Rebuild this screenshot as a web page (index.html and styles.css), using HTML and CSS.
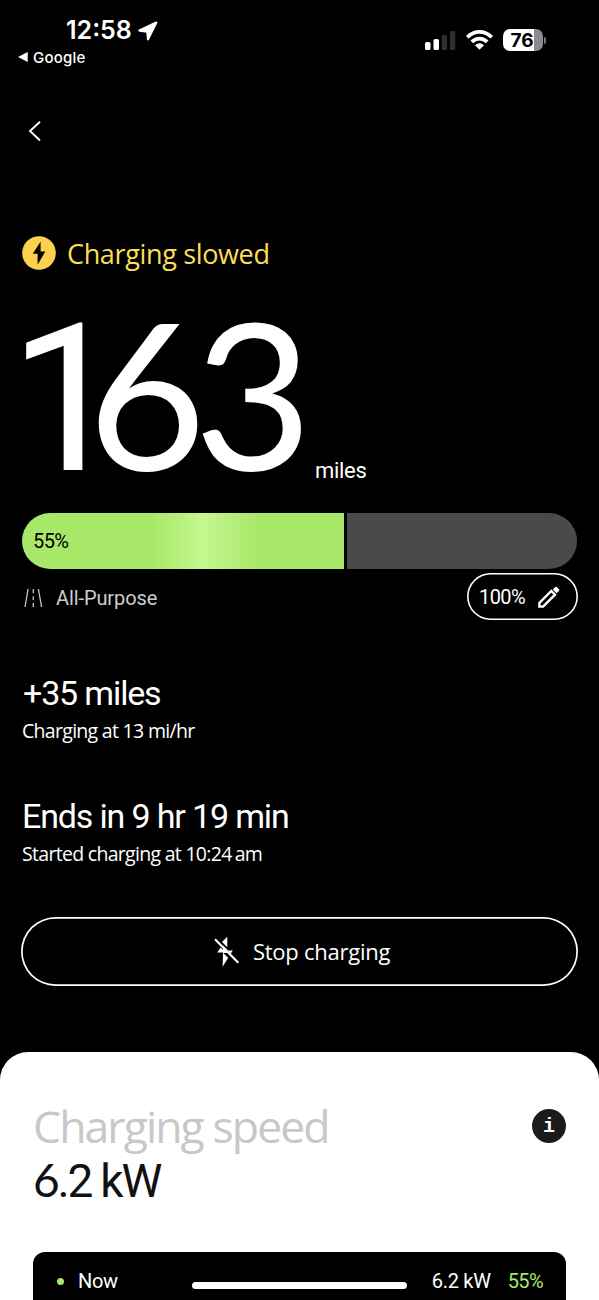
FILE: index.html
```html
<!DOCTYPE html>
<html lang="en">
<head>
<meta charset="utf-8">
<title>Charging</title>
<link rel="stylesheet" href="styles.css">
</head>
<body>
<div class="screen">
  <header class="status-bar">
    <div class="status-left">
      <div class="clock"><span class="time">12:58</span>
        <svg width="20" height="20" viewBox="0 0 20 20"><path d="M18.3 1.6 10 18.3 9.3 10.7 1.4 9.6Z" fill="#fff" stroke="#fff" stroke-width="2.2" stroke-linejoin="round"/></svg>
      </div>
      <div class="back-app">
        <svg width="10" height="10" viewBox="0 0 10 10"><path d="M9.7 0V10L0 5Z" fill="#fff"/></svg>
        <span>Google</span>
      </div>
    </div>
    <div class="status-right">
      <svg class="signal" width="31" height="20" viewBox="0 0 31 20"><rect x="0" y="12" width="5.5" height="8" rx="1.6" fill="#fff"/><rect x="8.5" y="9" width="5.5" height="11" rx="1.6" fill="#fff"/><rect x="16.8" y="5" width="5.3" height="15" rx="1.6" fill="#30302c"/><rect x="25" y="1" width="5.3" height="19" rx="1.6" fill="#30302c"/></svg>
      <svg class="wifi" width="27" height="20" viewBox="0 0 27 20"><g fill="none" stroke="#fff" stroke-width="3.7"><path d="M1.3 7.3C8.3.1 18.7.1 25.7 7.3"/><path d="M5.8 11.9C10.2 7.4 16.8 7.4 21.2 11.9"/></g><path d="M9 15.2Q13.5 11.3 18 15.2L13.5 19.7Z" fill="#fff"/></svg>
      <div class="battery"><span class="cell">76</span><span class="nub"></span></div>
    </div>
  </header>

  <nav class="nav"><svg width="14" height="22" viewBox="0 0 14 22"><path d="M12 1.7 2 11 12 20.5" fill="none" stroke="#fff" stroke-width="1.9"/></svg></nav>

  <main class="content">
    <div class="alert">
      <svg width="34" height="34" viewBox="0 0 34 34"><circle cx="17" cy="17" r="16.8" fill="#fbd24e"/><path d="M18.6 5.4 10.8 17.8H15.6V28.8L23.3 15.6H18.6Z" fill="#050500"/></svg>
      <span class="alert-text">Charging slowed</span>
    </div>
    <div class="range"><span class="range-value"><span class="one">1</span><span class="six">63</span></span><span class="range-unit">miles</span></div>
    <div class="gauge"><div class="gauge-fill">55%</div><div class="gauge-rest"></div></div>
    <div class="mode-row">
      <div class="mode">
        <svg width="20" height="20" viewBox="0 0 20 20"><g fill="none" stroke="#c8c8c8" stroke-width="1.3"><path d="M4.1 1 1 19M14.4 1 17.6 19M9.3 1V5.3M9.3 8.2V12M9.3 14.9V19"/></g></svg>
        <span>All-Purpose</span>
      </div>
      <div class="limit"><span>100%</span>
        <svg width="22" height="22" viewBox="0 0 22 22"><path d="M1.4 16.9V20.6H5.1L17 8.7 13.3 5Z" fill="none" stroke="#fff" stroke-width="2.4"/><path d="M14.8 3.5 17.2 1.1Q18 .3 18.8 1.1L21 3.3Q21.8 4.1 21 4.9L18.6 7.3Z" fill="#fff"/></svg>
      </div>
    </div>
    <section class="stat added"><h2>+35 miles</h2><p>Charging at 13 mi/hr</p></section>
    <section class="stat ends"><h2>Ends in 9 hr 19 min</h2><p>Started charging at 10:24<span class="meridiem">am</span></p></section>
    <div class="stop">
      <svg width="26" height="32" viewBox="0 0 26 32"><path d="M13.3 .8V11.2L8 5.9ZM3.2 16.6 6.6 11.6 11.5 16.6ZM13.7 14.5H18.8L16.6 18ZM9 16.7 14.2 21.7 8.6 30.7Z" fill="#fff"/><path d="M8.8 9.2 13.4 13.8V17L9 17Z" fill="#fff"/><path d="M1 3.3 24.3 26.8" stroke="#fff" stroke-width="2.1"/></svg>
      <span>Stop charging</span>
    </div>
  </main>

  <section class="sheet">
    <div class="sheet-head"><h3>Charging speed</h3><span class="info">i</span></div>
    <div class="power"><span class="six">6</span>.2 kW</div>
    <div class="chart">
      <span class="dot"></span><span class="now">Now</span>
      <span class="now-power">6.2 kW</span><span class="now-percent">55%</span>
      <span class="home-indicator"></span>
    </div>
  </section>
</div>
</body>
</html>
```
FILE: styles.css
```css
* { box-sizing: border-box; }
body { margin: 0; background: #000; }
h2, h3, p { margin: 0; font-weight: 400; }
svg { display: block; flex: none; }
.screen {
  width: 599px; height: 1300px; overflow: hidden;
  display: flex; flex-direction: column;
  background: #000; color: #fff;
  font-family: Roboto, "Liberation Sans", sans-serif;
  white-space: nowrap;
}
.status-bar { height: 80px; flex: none; display: flex; justify-content: space-between; font-family: Inter, sans-serif; }
.status-left { padding: 15px 0 0 18px; }
.clock { display: flex; align-items: center; gap: 6px; padding-left: 48px; height: 31px; }
.time { font-size: 25px; font-weight: 600; line-height: 31px; }
.back-app { display: flex; align-items: center; gap: 5px; height: 22px; font-size: 15px; font-weight: 500; letter-spacing: .2px; }
.status-right { display: flex; padding: 30px 53px 0 0; }
.signal { margin-right: 10px; }
.wifi { margin-right: 10px; }
.battery { display: flex; align-items: center; gap: 1px; height: 22px; margin-top: -1px; }
.cell {
  width: 40px; height: 22px; border-radius: 7px; padding-right: 2px;
  background: linear-gradient(90deg, #fff 31px, #8b8b8b 31px);
  color: #000; font-size: 19px; font-weight: 700; line-height: 23px; text-align: center;
}
.nub { width: 2px; height: 7px; border-radius: 0 2px 2px 0; background: #777; }
.nav { height: 156px; flex: none; padding: 40px 0 0 28px; }
.content { height: 816px; flex: none; padding: 0 22px; }
.alert { display: flex; align-items: center; gap: 11px; height: 34px; color: #fbdf55; }
.alert-text { font-family: "Open Sans", sans-serif; font-size: 27px; line-height: 34px; letter-spacing: -.35px; padding-top: 2px; }
.range { display: flex; align-items: flex-end; height: 243px; padding-bottom: 27px; }
.range-value { display: flex; align-items: baseline; width: 281px; font-size: 204px; line-height: 180px; height: 180px; margin-bottom: 5px; }
.six { font-family: Lato, sans-serif; }
.one { margin-left: -13px; font-size: 206px; letter-spacing: -37px; }
.range-value .six { letter-spacing: -12px; }
.range-unit { font-size: 22px; line-height: 30px; margin-left: 12px; letter-spacing: -.3px; }
.gauge { display: flex; gap: 3px; height: 56px; border-radius: 28px; overflow: hidden; }
.gauge-fill {
  width: 322px; padding-left: 11px; color: #000; font-size: 20px; line-height: 56px; letter-spacing: -.6px;
  background: linear-gradient(90deg, #a8e868 130px, #c5f791 181px, #a8e868 235px);
}
.gauge-rest { flex: 1; background: #4a4a4a; }
.mode-row { display: flex; justify-content: space-between; height: 51px; padding-top: 4px; }
.mode { display: flex; align-items: center; gap: 12px; height: 49px; padding-left: 2px; color: #ccc; font-size: 20px; letter-spacing: -.1px; }
.limit {
  display: flex; align-items: center; justify-content: space-between;
  width: 111px; height: 47px; padding: 0 18px 0 12px; margin-right: -1px;
  box-shadow: inset 0 0 0 1.6px #fff; border-radius: 24px; font-size: 20px; letter-spacing: -.6px;
}
.stat h2 { font-size: 34px; line-height: 40px; letter-spacing: -1.15px; }
.stat p { font-family: "Open Sans", sans-serif; font-size: 19.5px; line-height: 36px; letter-spacing: -.7px; }
.added { margin-top: 53px; }
.added h2 { padding-left: 1px; }
.ends { margin-top: 47px; }
.meridiem { margin-left: 3px; }
.stop {
  display: flex; align-items: center; justify-content: center; gap: 13px;
  height: 69px; margin: 45px -1px 0; padding-left: 5px; box-shadow: inset 0 0 0 1.7px #fff; border-radius: 35px;
  font-family: "Open Sans", sans-serif; font-size: 22px; line-height: 28px; letter-spacing: -.25px;
}
.stop span { margin-top: -1px; }
.sheet { flex: 1; padding: 52px 33px 0; border-radius: 28px 28px 0 0; background: #fff; color: #111; }
.sheet-head { display: flex; justify-content: space-between; height: 50px; }
.sheet-head h3 { font-family: "Open Sans", sans-serif; font-size: 44.5px; line-height: 44px; letter-spacing: -1.9px; color: #c8c8c8; }
.info {
  width: 34px; height: 34px; margin-top: 5px; border-radius: 50%; background: #1b1b1b; color: #fff;
  font: bold 20px/36px "Liberation Mono", monospace; text-align: center;
}
.power { height: 98px; font-size: 46px; line-height: 52px; letter-spacing: -2.2px; }
.chart {
  position: relative; display: flex; align-items: center; height: 70px; padding: 0 23px 12px 24px;
  border-radius: 12px; background: #000; color: #fff; font-size: 20px; letter-spacing: -.3px;
}
.dot { width: 7px; height: 7px; border-radius: 50%; background: #a8e868; }
.now { margin-left: 14px; }
.now-power { margin-left: auto; }
.now-percent { margin-left: 17px; color: #a8e868; letter-spacing: -.6px; }
.home-indicator { position: absolute; left: 159px; top: 30px; width: 215px; height: 7px; border-radius: 4px; background: #fff; }
```
